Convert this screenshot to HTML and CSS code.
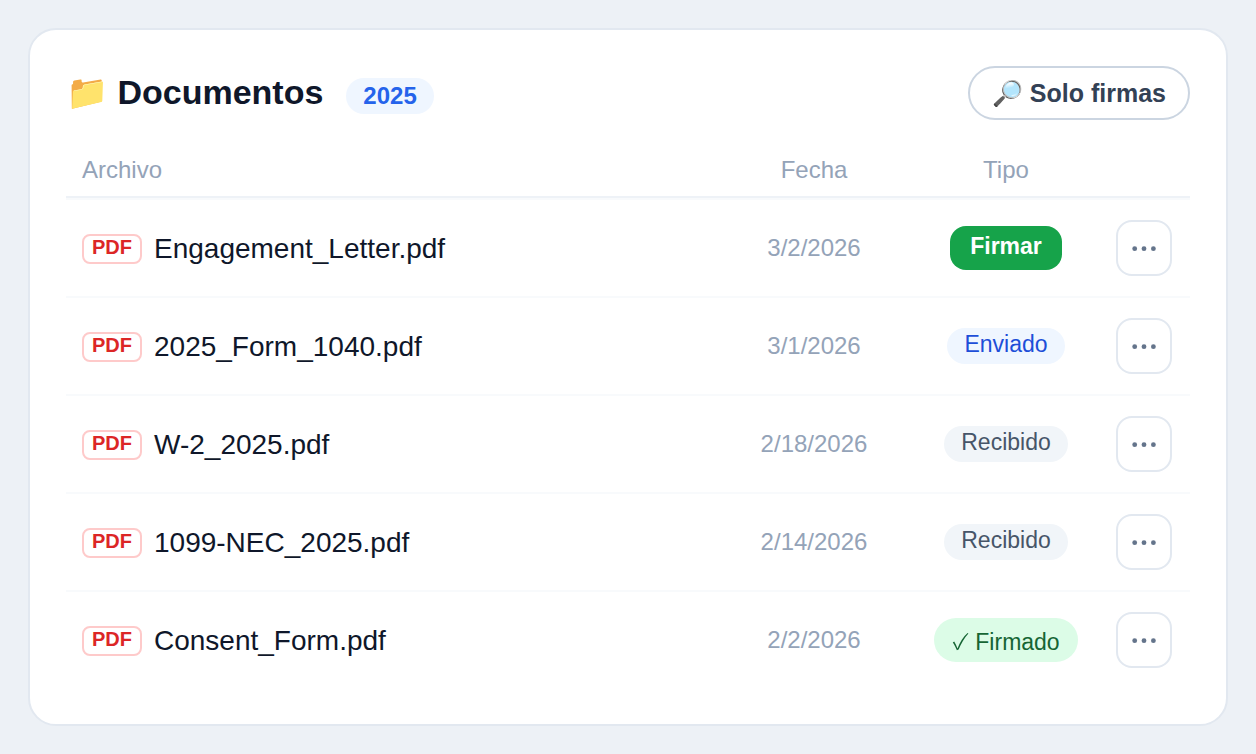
FILE: index.html
```
<!DOCTYPE html>
<html lang="es">
<head>
<meta charset="utf-8">
<title>Documentos</title>
<link rel="stylesheet" href="styles.css">
</head>
<body>
<svg class="defs" aria-hidden="true">
  <symbol id="dots" viewBox="0 0 26 6"><circle cx="3.7" cy="2.7" r="2.4"/><circle cx="13" cy="2.7" r="2.4"/><circle cx="22.4" cy="2.7" r="2.4"/></symbol>
</svg>
<main class="card">
  <header class="head">
    <h1 class="title"><span class="emoji">📁</span> Documentos</h1>
    <span class="year">2025</span>
    <button class="filter" type="button">🔎 Solo firmas</button>
  </header>
  <table class="docs">
    <thead>
      <tr><th class="file">Archivo</th><th class="date">Fecha</th><th class="kind">Tipo</th><td class="menu"></td></tr>
    </thead>
    <tbody>
      <tr><td class="file"><span class="pdf">PDF</span><span class="name">Engagement_Letter.pdf</span></td><td class="date">3/2/2026</td><td class="kind"><button class="sign" type="button">Firmar</button></td><td class="menu"><button class="more" type="button" aria-label="Opciones"><svg class="dots"><use href="#dots"/></svg></button></td></tr>
      <tr><td class="file"><span class="pdf">PDF</span><span class="name">2025_Form_1040.pdf</span></td><td class="date">3/1/2026</td><td class="kind"><span class="pill sent">Enviado</span></td><td class="menu"><button class="more" type="button" aria-label="Opciones"><svg class="dots"><use href="#dots"/></svg></button></td></tr>
      <tr><td class="file"><span class="pdf">PDF</span><span class="name">W-2_2025.pdf</span></td><td class="date">2/18/2026</td><td class="kind"><span class="pill received">Recibido</span></td><td class="menu"><button class="more" type="button" aria-label="Opciones"><svg class="dots"><use href="#dots"/></svg></button></td></tr>
      <tr><td class="file"><span class="pdf">PDF</span><span class="name">1099-NEC_2025.pdf</span></td><td class="date">2/14/2026</td><td class="kind"><span class="pill received">Recibido</span></td><td class="menu"><button class="more" type="button" aria-label="Opciones"><svg class="dots"><use href="#dots"/></svg></button></td></tr>
      <tr><td class="file"><span class="pdf">PDF</span><span class="name">Consent_Form.pdf</span></td><td class="date">2/2/2026</td><td class="kind"><span class="pill signed"><svg class="tick" viewBox="0 0 17 18" aria-hidden="true"><path d="M0.8 9.4 L2.2 8.5 C3.4 10.6 4.6 12.9 5.5 15.4 C7.8 9.2 11.4 3.6 15.6 0 L16.4 0.5 C12.4 4.9 9 10.8 6.6 16.6 L4.9 17.2 C3.8 14.4 2.4 11.6 0.8 9.4 Z"/></svg>Firmado</span></td><td class="menu"><button class="more" type="button" aria-label="Opciones"><svg class="dots"><use href="#dots"/></svg></button></td></tr>
    </tbody>
  </table>
</main>
</body>
</html>
```
FILE: styles.css
```
* { box-sizing: border-box; }
body {
  margin: 0;
  padding: 28px;
  background: #edf1f6;
  color: #0f172a;
  font-family: "Liberation Sans", Arial, sans-serif;
}
button { font-family: inherit; }
.defs { display: none; }
.card {
  padding: 36px;
  background: #fff;
  border: 2px solid #e2e8f0;
  border-radius: 28px;
}
.head {
  display: flex;
  align-items: center;
  height: 54px;
}
.title {
  margin: 0 0 2px;
  font-size: 34px;
  line-height: 40px;
  font-weight: 700;
}
.year {
  margin: 6px 0 0 23px;
  padding: 0 17px;
  border-radius: 18px;
  background: #eff6ff;
  color: #2563eb;
  font-size: 24px;
  line-height: 36px;
  font-weight: 700;
}
.filter {
  height: 54px;
  margin-left: auto;
  padding: 0 22px;
  border: 2px solid #cbd5e1;
  border-radius: 27px;
  background: #fff;
  color: #334155;
  font-size: 25px;
  font-weight: 700;
}
.docs {
  width: 100%;
  margin-top: 24px;
  border-collapse: separate;
  border-spacing: 0;
  table-layout: fixed;
}
.docs th, .docs td { padding: 0; text-align: center; vertical-align: middle; }
.docs th {
  color: #94a3b8;
  font-size: 24px;
  font-weight: 400;
}
.docs thead th, .docs thead td {
  height: 54px;
  border-bottom: 2px solid #eef2f7;
}
.docs tbody td { height: 98px; border-top: 2px solid #f8fafc; }
.docs th.file, .docs td.file { padding-left: 16px; text-align: left; }
.docs td.file { padding-top: 2px; }
.docs .date { width: 180px; color: #94a3b8; font-size: 24px; }
.docs .kind { width: 204px; }
.docs .menu { width: 82px; padding-right: 18px; text-align: right; }
.pdf {
  display: inline-block;
  width: 60px;
  margin-right: 12px;
  padding-bottom: 4px;
  border: 2px solid #fecaca;
  border-radius: 8px;
  color: #dc2626;
  font-size: 20px;
  line-height: 22px;
  font-weight: 700;
  text-align: center;
  vertical-align: middle;
}
.name { font-size: 28px; vertical-align: middle; }
.pill {
  display: inline-block;
  padding: 0 17px 4px;
  border-radius: 22px;
  font-size: 23px;
  line-height: 32px;
  vertical-align: middle;
}
.sent { background: #eff6ff; color: #1d4ed8; }
.received { background: #f1f5f9; color: #475569; }
.signed {
  display: inline-flex;
  align-items: center;
  gap: 6px;
  padding: 4px 18px 0;
  background: #dcfce7;
  color: #166534;
  line-height: 40px;
}
.tick { width: 17px; height: 18px; fill: currentColor; }
.sign {
  height: 44px;
  padding: 0 20px 4px;
  border: 0;
  border-radius: 16px;
  background: #16a34a;
  color: #fff;
  font-size: 23px;
  font-weight: 700;
  vertical-align: middle;
}
.more {
  display: inline-flex;
  align-items: center;
  justify-content: center;
  width: 56px;
  height: 56px;
  padding: 2px 0 0;
  border: 2px solid #e2e8f0;
  border-radius: 16px;
  background: #fff;
  color: #64748b;
  vertical-align: middle;
}
.dots { width: 26px; height: 6px; fill: currentColor; }
```
